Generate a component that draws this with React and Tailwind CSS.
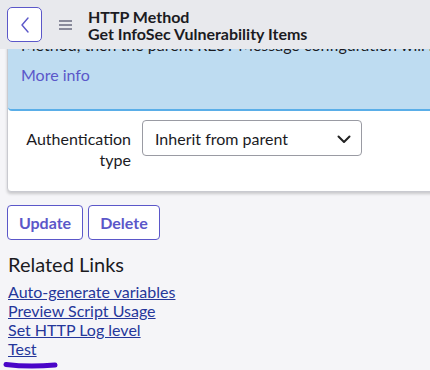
import React from 'react';

const links = ['Auto-generate variables', 'Preview Script Usage', 'Set HTTP Log level', 'Test'];

const App = () => {
  return (
    <div
      className="w-[430px] h-[370px] overflow-hidden bg-[#f5f5f8] text-[#1b1b1f]"
      style={{ fontFamily: 'Lato, "Noto Sans", sans-serif' }}
    >
      {/* header */}
      <header className="relative z-10 h-[49px] bg-[#e8e9ed] flex items-center pl-[7px]">
        <button className="w-[35px] h-[35px] rounded-[5px] border border-[#5b57c9] bg-white flex items-center justify-center">
          <svg width="12" height="18" viewBox="0 0 12 18" fill="none">
            <path d="M9 2 L3 9 L9 16" stroke="#5b57c9" strokeWidth="1.4" strokeLinecap="round" strokeLinejoin="round" />
          </svg>
        </button>
        <svg className="ml-[17px]" width="13" height="10" viewBox="0 0 13 10">
          <path d="M0 1h13M0 5h13M0 9h13" stroke="#2a2d4a" strokeWidth="1.2" />
        </svg>
        <div className="ml-[16px] font-bold text-[16px] leading-[17px] text-[#1b1b22]">
          <div>HTTP Method</div>
          <div>Get InfoSec Vulnerability Items</div>
        </div>
      </header>

      <main className="px-[7px] -mt-[15px]">
        {/* card */}
        <div className="w-[440px] bg-white border border-[#c9cad0] rounded-[4px] shadow-[0_2px_3px_rgba(0,0,0,0.18)] overflow-hidden">
          <div className="bg-[#bedcf1] border-b-2 border-[#5aaee8] rounded-b-[4px] pl-[13px] pb-[24px] text-[16px]">
            <p className="leading-[20px] whitespace-nowrap">
              Method, then the parent REST Message configuration will be used.
            </p>
            <a className="block mt-[10px] leading-[20px] text-[#5b57c9]">More info</a>
          </div>
          <div className="flex items-start pt-[9px] pb-[21px]">
            <label className="w-[123px] text-right text-[16px] leading-[21px] pt-[8px]">
              Authentication
              <br />
              type
            </label>
            <div className="ml-[11px] w-[220px] h-[36px] border border-[#9a9ba3] rounded-[4px] flex items-center justify-between pl-[12px] pr-[10px] pt-[2px] text-[16px]">
              <span>Inherit from parent</span>
              <svg width="14" height="9" viewBox="0 0 14 9" fill="none">
                <path d="M1.5 1.5 L7 7 L12.5 1.5" stroke="#222" strokeWidth="2" strokeLinecap="round" strokeLinejoin="round" />
              </svg>
            </div>
          </div>
        </div>

        {/* buttons */}
        <div className="flex gap-[5px] mt-[13px]">
          <button className="w-[76px] h-[35px] rounded-[4px] border border-[#5b57c9] bg-white text-[#5b57c9] font-bold text-[16px]">
            Update
          </button>
          <button className="w-[72px] h-[35px] rounded-[4px] border border-[#5b57c9] bg-white text-[#5b57c9] font-bold text-[16px]">
            Delete
          </button>
        </div>

        <h2 className="mt-[12px] ml-[1px] text-[20px] leading-[24px]">Related Links</h2>
        <ul className="mt-[6px] ml-[1px] text-[16px] leading-[19px]">
          {links.map((l) => (
            <li key={l}>
              <a className="underline text-[#25379a]">{l}</a>
            </li>
          ))}
        </ul>
        <svg className="-ml-[4px] mt-[3px]" width="56" height="8" viewBox="0 0 56 8">
          <path d="M3 3.5 C15 5 35 5.5 52 4" stroke="#4a05c8" strokeWidth="5" strokeLinecap="round" fill="none" />
        </svg>
      </main>
    </div>
  );
};

export default App;
